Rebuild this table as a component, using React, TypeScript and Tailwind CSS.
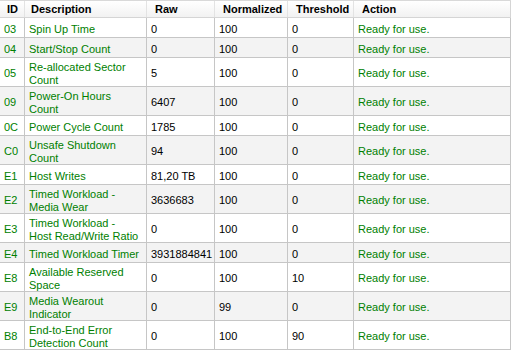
import React from 'react'

// ─── Data ─────────────────────────────────────────────────────

type Attr = {
  id: string
  desc: string[]
  raw: string
  norm: string
  thr: string
}

const ROWS: Attr[] = [
  { id: '03', desc: ['Spin Up Time'], raw: '0', norm: '100', thr: '0' },
  { id: '04', desc: ['Start/Stop Count'], raw: '0', norm: '100', thr: '0' },
  { id: '05', desc: ['Re-allocated Sector', 'Count'], raw: '5', norm: '100', thr: '0' },
  { id: '09', desc: ['Power-On Hours', 'Count'], raw: '6407', norm: '100', thr: '0' },
  { id: '0C', desc: ['Power Cycle Count'], raw: '1785', norm: '100', thr: '0' },
  { id: 'C0', desc: ['Unsafe Shutdown', 'Count'], raw: '94', norm: '100', thr: '0' },
  { id: 'E1', desc: ['Host Writes'], raw: '81,20 TB', norm: '100', thr: '0' },
  { id: 'E2', desc: ['Timed Workload -', 'Media Wear'], raw: '3636683', norm: '100', thr: '0' },
  { id: 'E3', desc: ['Timed Workload -', 'Host Read/Write Ratio'], raw: '0', norm: '100', thr: '0' },
  { id: 'E4', desc: ['Timed Workload Timer'], raw: '3931884841', norm: '100', thr: '0' },
  { id: 'E8', desc: ['Available Reserved', 'Space'], raw: '0', norm: '100', thr: '10' },
  { id: 'E9', desc: ['Media Wearout', 'Indicator'], raw: '0', norm: '99', thr: '0' },
  { id: 'B8', desc: ['End-to-End Error', 'Detection Count'], raw: '0', norm: '100', thr: '90' },
]

const COLS = ['w-[25px]', 'w-[122px]', 'w-[68px]', 'w-[73px]', 'w-[66px]', 'w-[157px]']

// ─── Header ───────────────────────────────────────────────────

function Header() {
  const labels = ['ID', 'Description', 'Raw', 'Normalized', 'Threshold', 'Action']
  return (
    <div className="flex h-[18px] border-t border-b border-t-[#d9d9d9] border-b-[#d5d5d5] bg-gradient-to-b from-white to-[#f2f2f2]">
      {labels.map((l, i) => (
        <div
          key={l}
          className={`${COLS[i]} shrink-0 flex items-center pt-[1px] font-bold text-black border-r border-[#e3e3e3] ${
            i === 0 ? 'pl-[7px]' : i === 1 ? 'pl-[6px]' : 'pl-[8px]'
          } ${i === 5 ? 'border-r-[#d5d5d5]' : ''}`}
        >
          {l}
        </div>
      ))}
    </div>
  )
}

// ─── Row ──────────────────────────────────────────────────────

function Row({ row, odd }: { row: Attr; odd: boolean }) {
  const tall = row.desc.length > 1
  const cell = 'shrink-0 flex items-center pl-[4px] pt-[3px] border-r border-[#c6c6c6]'
  return (
    <div
      className={`flex border-b border-[#c6c6c6] ${tall ? 'h-[29px]' : 'h-[20px]'} ${
        odd ? 'bg-[#f3f3f3]' : 'bg-white'
      }`}
    >
      <div className={`${COLS[0]} ${cell} text-[#008000]`}>{row.id}</div>
      <div className={`${COLS[1]} ${cell} text-[#008000]`}>
        <div className="leading-[13px]">
          {row.desc.map((d) => (
            <div key={d}>{d}</div>
          ))}
        </div>
      </div>
      <div className={`${COLS[2]} ${cell} text-black`}>{row.raw}</div>
      <div className={`${COLS[3]} ${cell} text-black`}>{row.norm}</div>
      <div className={`${COLS[4]} ${cell} text-black`}>{row.thr}</div>
      <div className={`${COLS[5]} ${cell} text-[#008000]`}>Ready for use.</div>
    </div>
  )
}

export default function App() {
  return (
    <div className="w-[511px] h-[352px] bg-white text-[11px] font-['Liberation_Sans',Arial,sans-serif] overflow-hidden">
      <Header />
      {ROWS.map((r, i) => (
        <Row key={r.id} row={r} odd={i % 2 === 1} />
      ))}
    </div>
  )
}
